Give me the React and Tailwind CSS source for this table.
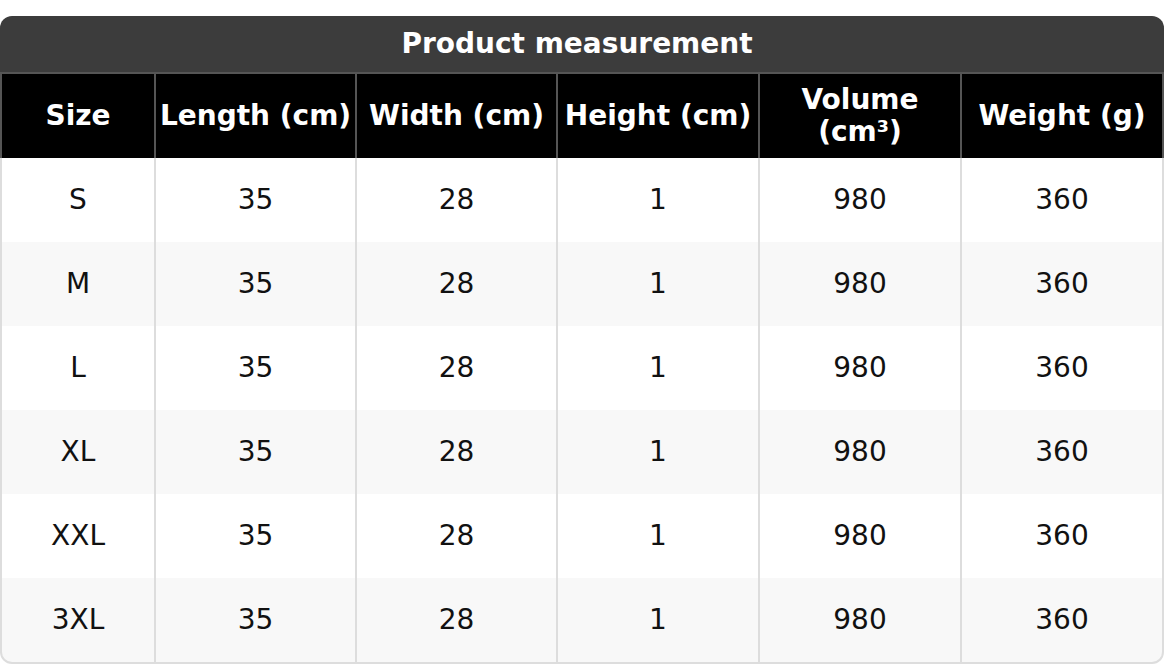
const columns = ['Size', 'Length (cm)', 'Width (cm)', 'Height (cm)', 'Volume (cm³)', 'Weight (g)'];

const rows = [
  ['S', '35', '28', '1', '980', '360'],
  ['M', '35', '28', '1', '980', '360'],
  ['L', '35', '28', '1', '980', '360'],
  ['XL', '35', '28', '1', '980', '360'],
  ['XXL', '35', '28', '1', '980', '360'],
  ['3XL', '35', '28', '1', '980', '360'],
];

const cols = 'grid grid-cols-[152px_199px_199px_200px_200px_200px] gap-x-[2px]';

export default function App() {
  return (
    <div
      className="w-[1164px] h-[664px] bg-white pt-[16px]"
      style={{ fontFamily: '"DejaVu Sans", "Liberation Sans", sans-serif' }}
    >
      <div className="h-[56px] rounded-t-[12px] bg-[#3c3c3c] flex items-center justify-center pr-[10px] text-white font-bold text-[28px]">
        Product measurement
      </div>

      <div className={`${cols} bg-[#555] px-[2px] pt-[2px]`}>
        {columns.map((c) =>
          c === 'Volume (cm³)' ? (
            <div key={c} className="h-[84px] bg-black text-white font-bold text-[28px] flex flex-col items-center justify-center leading-[32px]">
              <span>Volume</span>
              <span>(cm³)</span>
            </div>
          ) : (
            <div key={c} className="h-[84px] bg-black text-white font-bold text-[28px] flex items-center justify-center whitespace-nowrap">
              {c}
            </div>
          )
        )}
      </div>

      <div className="bg-[#ddd] px-[2px] pb-[2px] rounded-b-[12px] overflow-hidden">
        <div className="rounded-b-[10px] overflow-hidden">
          {rows.map((r, i) => (
            <div key={r[0]} className={`${cols} bg-[#ddd]`}>
              {r.map((v, j) => (
                <div
                  key={j}
                  className={`h-[84px] flex items-center justify-center text-[28px] text-[#111] ${i % 2 ? 'bg-[#f8f8f8]' : 'bg-white'}`}
                >
                  {v}
                </div>
              ))}
            </div>
          ))}
        </div>
      </div>
    </div>
  );
}
